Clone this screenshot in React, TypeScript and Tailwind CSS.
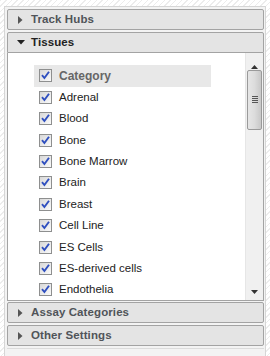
import React from "react";

const items = [
  "Adrenal",
  "Blood",
  "Bone",
  "Bone Marrow",
  "Brain",
  "Breast",
  "Cell Line",
  "ES Cells",
  "ES-derived cells",
  "Endothelia",
];

function Check() {
  return (
    <span className="w-[13px] h-[13px] shrink-0 border border-[#8e8f8f] bg-[linear-gradient(135deg,#d8d8d8,#fafafa)] flex items-center justify-center">
      <svg width="9" height="9" viewBox="0 0 9 9">
        <path d="M1 4.2 L3.4 7 L8 0.8" fill="none" stroke="#2f4fbf" strokeWidth="1.9" />
      </svg>
    </span>
  );
}

function Header({ label, open }: { label: string; open?: boolean }) {
  return (
    <div
      className={`h-[21px] shrink-0 border border-[#a3a3a3] bg-[#e4e4e4] flex items-center ${
        open ? "rounded-t-[2px]" : "rounded-[2px]"
      }`}
    >
      <span className="w-[23px] flex justify-center pl-[2px]">
        {open ? (
          <svg width="8" height="5" viewBox="0 0 8 5">
            <path d="M0 0 H8 L4 4.5 Z" fill="#222" />
          </svg>
        ) : (
          <svg width="5" height="8" viewBox="0 0 5 8">
            <path d="M0 0 V8 L4.5 4 Z" fill="#555" />
          </svg>
        )}
      </span>
      <span
        className={`text-[11.5px] font-bold tracking-[0.1px] ${open ? "text-[#222]" : "text-[#505459]"}`}
      >
        {label}
      </span>
    </div>
  );
}

export default function App() {
  return (
    <div
      className="w-[270px] h-[356px] overflow-hidden pt-[6px] pl-[4px] pr-[4px] bg-[repeating-linear-gradient(135deg,#ececec_0px,#ececec_1px,#ffffff_1px,#ffffff_4px)]"
      style={{ fontFamily: '"Liberation Sans", Arial, sans-serif' }}
    >
      <div className="h-[360px] border border-[#d6d6d6] bg-[#f3f3f3] pl-[2px] pr-[1px] pt-[2px] flex flex-col">
        <Header label="Track Hubs" />
        <div className="h-[2px]" />
        <Header label="Tissues" open />
        <div className="h-[248px] border-x border-b border-[#a3a3a3] bg-white flex">
          <div className="flex-1 pl-[26px] pt-[12px]">
            <div className="w-[177px] h-[22px] bg-[#e8e8e8] flex items-center pl-[5px] gap-[7px]">
              <Check />
              <span className="text-[12px] font-bold text-[#666]">Category</span>
            </div>
            {items.map((it) => (
              <div key={it} className="h-[21.4px] flex items-center pl-[5px] gap-[7px]">
                <Check />
                <span className="text-[11.5px] text-[#222]">{it}</span>
              </div>
            ))}
          </div>
          <div className="w-[18px] bg-[#f0f0f0] border-l border-[#e6e6e6] flex flex-col items-center">
            <div className="h-[16px] flex items-end justify-center">
              <svg width="7" height="4" viewBox="0 0 7 4">
                <path d="M0 4 H7 L3.5 0 Z" fill="#333" />
              </svg>
            </div>
            <div className="mt-[1px] w-[15px] h-[60px] rounded-[2px] border border-[#9a9a9a] bg-[linear-gradient(90deg,#e6e6e6,#dcdcdc_50%,#c8c8c8)] flex flex-col items-center justify-center gap-[1px]">
              <div className="w-[6px] h-[1px] bg-[#555]" />
              <div className="w-[6px] h-[1px] bg-[#555]" />
              <div className="w-[6px] h-[1px] bg-[#555]" />
              <div className="w-[6px] h-[1px] bg-[#555]" />
            </div>
            <div className="flex-1" />
            <div className="h-[10px] flex items-start justify-center">
              <svg width="7" height="4" viewBox="0 0 7 4">
                <path d="M0 0 H7 L3.5 4 Z" fill="#333" />
              </svg>
            </div>
          </div>
        </div>
        <div className="h-[2px]" />
        <Header label="Assay Categories" />
        <div className="h-[2px]" />
        <Header label="Other Settings" />
        <div className="h-[2px]" />
        <div className="border-t border-[#dcdcdc] h-[20px]" />
      </div>
    </div>
  );
}
